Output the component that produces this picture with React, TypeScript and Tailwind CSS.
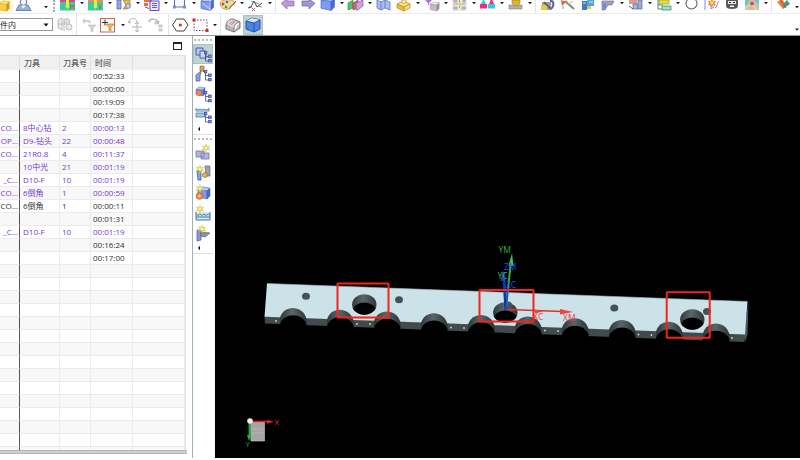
import type { ReactNode } from "react";
import clsx from "clsx";

const FONT = "font-['Open_Sans','Noto_Sans_CJK_SC',sans-serif]";

type Row = { op?: string; tool?: string; no?: string; time?: string; done?: boolean };

const ROWS: Row[] = [
  { time: "00:52:33" },
  { time: "00:00:00" },
  { time: "00:19:09" },
  { time: "00:17:38" },
  { op: "CO...", tool: "8中心钻", no: "2", time: "00:00:13", done: true },
  { op: "OP...", tool: "D9-钻头", no: "22", time: "00:00:48", done: true },
  { op: "CO...", tool: "21R0.8", no: "4", time: "00:11:37", done: true },
  { tool: "10中光", no: "21", time: "00:01:19", done: true },
  { op: "_C...", tool: "D10-F", no: "10", time: "00:01:19", done: true },
  { op: "CO...", tool: "6倒角", no: "1", time: "00:00:59", done: true },
  { op: "CO...", tool: "6倒角", no: "1", time: "00:00:11" },
  { time: "00:01:31" },
  { op: "_C...", tool: "D10-F", no: "10", time: "00:01:19", done: true },
  { time: "00:16:24" },
  { time: "00:17:00" },
  ...Array.from({ length: 14 }, () => ({})),
];

/* ---------- toolbar parts ---------- */

function Top({ label, menu, children }: { label: string; menu?: boolean; children: ReactNode }) {
  return (
    <>
      <button aria-label={label} className="h-3 w-5 shrink-0">
        <svg viewBox="0 0 20 12" className="h-3 w-5">{children}</svg>
      </button>
      {menu && <Caret label={label} high />}
    </>
  );
}

function Tool({ label, active, children }: { label: string; active?: boolean; children: ReactNode }) {
  return (
    <button
      aria-label={label}
      className={clsx("h-5 w-5 shrink-0", active && "bg-[#bfd3d2] outline-1 -outline-offset-1 outline-[#a9c4c3]")}
    >
      <svg viewBox="0 0 20 20" className="h-5 w-5">{children}</svg>
    </button>
  );
}

function Caret({ label, high }: { label: string; high?: boolean }) {
  return (
    <button aria-label={`${label} menu`} className={clsx("w-2 shrink-0", high ? "h-3" : "h-5")}>
      <svg viewBox={high ? "0 0 8 12" : "0 0 8 20"} className={clsx("w-2", high ? "h-3" : "h-5")}>
        <path d={high ? "M2 2h4L4 4.2z" : "M2 9h4L4 11.2z"} fill="#222" />
      </svg>
    </button>
  );
}

const Sep = () => <span className="mx-px h-full w-0.5 shrink-0 border-l border-[#e4e4e4]" />;

function Cube({ x = 0, y = 0, s = 1, c = ["#b9cdfb", "#7e9cf0", "#4b66cf"] }: { x?: number; y?: number; s?: number; c?: string[] }) {
  return (
    <g transform={`translate(${x} ${y}) scale(${s})`} stroke={c[2]} strokeWidth=".6" strokeLinejoin="round">
      <path d="M0 3 4 0l8 1-3 3z" fill={c[0]} />
      <path d="M0 3l9 1v8l-9-2z" fill={c[1]} />
      <path d="M9 4l3-3v8l-3 3z" fill={c[2]} />
    </g>
  );
}

const Star = ({ x, y }: { x: number; y: number }) => (
  <g transform={`translate(${x} ${y})`}>
    <path d="M0-4 1-1.3 3.8-2 2 0l2 2.2L1 1.4 0 4-1.1 1.4-4 2l2-2-1.8-2.2L-1-1.3z" fill="#efe24c" stroke="#b9b45a" strokeWidth=".4" />
    <circle r="1" fill="#fffbd0" />
  </g>
);

const Tree = ({ x, y }: { x: number; y: number }) => (
  <g transform={`translate(${x} ${y})`} fill="#8f9be0" stroke="#3c4aa6" strokeWidth=".8">
    <path d="M1.5 3v7H5M1.5 5.5H5" fill="none" />
    <rect x=".4" y=".4" width="2.4" height="2.4" />
    <rect x="4.6" y="4" width="2.6" height="2.4" />
    <rect x="4.6" y="8.4" width="2.6" height="2.4" />
  </g>
);

function MainToolbar() {
  return (
    <div className="flex h-3.5 w-full shrink-0 items-start overflow-hidden border-b border-[#ececec]">
      <button aria-label="New part" className="h-3 w-[13px] shrink-0 bg-[#fdf8d8]">
        <svg viewBox="0 0 13 12" className="h-3 w-[13px]">
          <Cube x={-1} y={1} s={0.85} c={["#ffe98a", "#f8cf45", "#d39c18"]} />
        </svg>
      </button>
      <Top label="Operator">
        <path d="M3 10.500 6 5h9l3 5.500z" fill="#8fb3e3" stroke="#4a6ea8" strokeWidth=".8" />
        <circle cx="10.500" cy="2" r="3.300" fill="#f3f6fb" stroke="#4d6f9f" />
        <path d="M8 5.500l2.500 3 2.500-3z" fill="#fff" />
      </Top>
      <span className="w-[9px] shrink-0" />
      <svg viewBox="0 0 8 12" className="h-3 w-2 shrink-0"><path d="M2 6h4L4 8.200z" fill="#222" /></svg>
      <span className="mx-[3px] h-3 w-px shrink-0 border-l-2 border-dotted border-[#aaa]" />
      <Top label="Mill setup" menu>
        <path d="M2 0h15v2H2z" fill="#e2408c" /><path d="M2 2h15v8.500H2z" fill="#3fc9a3" />
        <path d="M8 0h3v7H8z" fill="#dff03a" /><path d="M7 6h5l-2.500 3z" fill="#dff03a" />
        <path d="M12.500 9V5l1.800 2L16 5v4" fill="none" stroke="#d0452c" strokeWidth=".8" />
      </Top>
      <Top label="Turn setup" menu>
        <path d="M2 0h15v2H2z" fill="#f08a4a" /><path d="M2 2h15v8.500H2z" fill="#3fc9a3" />
        <path d="M8 0h3v7H8z" fill="#dff03a" /><path d="M7 6h5l-2.500 3z" fill="#dff03a" />
        <path d="M14 5v4" stroke="#d0452c" />
      </Top>
      <Top label="Create tool" menu>
        <path d="M3 0h4v9H3z" fill="#92a9de" stroke="#4c61a8" strokeWidth=".7" />
        <path d="M9 0h7v5l-3 4H9l3-4z" fill="#e6bf56" stroke="#9b7b35" strokeWidth=".7" />
        <circle cx="14" cy="6" r="2.500" fill="#c2cbe2" stroke="#6375a8" strokeWidth=".7" />
      </Top>
      <Top label="Create operation" menu>
        <path d="M2 0h8v2H2zM2 3h4v3H2z" fill="#ef6a42" /><path d="M3 7l4 1.500" stroke="#e24" />
        <path d="M8 1h9v9.500H8z" fill="#eceafe" stroke="#5847d6" />
        <path d="M10 3.500h5M10 5.500h5M10 7.500h5" stroke="#5847d6" strokeWidth=".9" />
      </Top>
      <Top label="Sketch" menu>
        <path d="M4.500 0v7h10V0" fill="#f7f8ff" stroke="#6270b5" />
        <path d="M3 5.500h3v3H3zM13 5.500h3v3h-3z" fill="#7f8bd1" />
      </Top>
      <Top label="Datum">
        <Cube x={3} y={-2} s={1.05} />
        <path d="M4 3l8 6M12 2v9" stroke="#e7eeff" strokeWidth=".8" />
      </Top>
      <Top label="Palette" menu>
        <path d="M2 3c0-4 14-5 15 0 0 3-5 1-5 4 0 4-10 3-10-4z" fill="#f0db9a" stroke="#a98a4a" strokeWidth=".7" />
        <circle cx="5" cy="4" r="1.500" fill="#e4473b" /><circle cx="8" cy="7" r="1.300" fill="#3b9e49" />
        <circle cx="9" cy="2" r="1.300" fill="#4c63d8" /><path d="M11 9l7-8" stroke="#a2452c" />
      </Top>
      <Top label="Spline" menu>
        <path d="M2 8l3-1 3-6 3 6 5-4" fill="none" stroke="#444" />
        <path d="M5 1l8 3M3 6l3 2M12 6l4 1" stroke="#777" strokeWidth=".8" />
        <path d="M6 8l3 3M9 8l-3 3" stroke="#dc2a2a" strokeWidth=".8" />
      </Top>
      <Sep />
      <Top label="Back">
        <path d="M3 3.500 9-1v2h7v5H9v3z" fill="#b8a0d6" stroke="#7f68a8" strokeWidth=".7" />
      </Top>
      <Top label="Forward">
        <path d="M17 3.500 11-1v2H4v5h7v3z" fill="#9d97d3" stroke="#6a6499" strokeWidth=".7" />
      </Top>
      <Top label="Shaded view" menu><Cube x={3} y={-3} s={1.12} /></Top>
      <Top label="Section" menu>
        <path d="M2 3l5-3v8l-5 2z" fill="#4fc274" stroke="#2a8748" strokeWidth=".6" />
        <path d="M7 3l5-3v8l-5 2z" fill="#e4605b" stroke="#8f3a44" strokeWidth=".6" />
        <path d="M10 3l7-3v6l-5 4h-2z" fill="#c2a1dc" stroke="#76559c" strokeWidth=".6" />
      </Top>
      <Top label="Map">
        <path d="M3 0l4 2 4-2 5 2v8l-5-2-4 2-4-2z" fill="#a9bef2" stroke="#5f75bb" strokeWidth=".8" />
        <path d="M7 1v9M11 0v8" stroke="#5f75bb" strokeWidth=".8" />
      </Top>
      <Top label="Assemblies" menu>
        <path d="M3 4l6-3 7 3-6 3z" fill="#fbe28b" stroke="#b98a1b" strokeWidth=".7" />
        <path d="M3 4l7 3v4L3 8z" fill="#f0bc3c" stroke="#b98a1b" strokeWidth=".7" />
        <path d="M10 7l6-3v4l-6 3z" fill="#fbd86a" stroke="#b98a1b" strokeWidth=".7" />
        <path d="M8 0h4v3H8z" fill="#fff1b9" stroke="#b98a1b" strokeWidth=".6" />
      </Top>
      <Top label="Filter objects" menu>
        <path d="M3 0h7L7 3v2H6V3z" fill="#b26be0" />
        <Cube x={8} y={2} s={0.76} c={["#eee", "#c9b8c4", "#9b8e9c"]} />
      </Top>
      <Top label="Pattern" menu>
        <path d="M3-1h13v11H3z" fill="#e9e9e6" stroke="#c4c4c4" strokeWidth=".6" />
        <path d="M4 0h3v2H4zM13 0h2v2h-2zM4 7h3v2H4zM12 7h3v2h-3z" fill="#ccc" stroke="#999" strokeWidth=".7" />
        <path d="M9.500 0v8M4 4h11" stroke="#a9a37c" /><circle cx="9.500" cy="4" r="1.700" fill="#f0dc4a" />
      </Top>
      <Top label="Compare" menu>
        <path d="M2 4h7v4.500H2z" fill="#ec3182" /><path d="M5.500-1 8 4H3z" fill="#34c6e4" />
        <path d="M10 4h7v4.500h-7z" fill="#34c6e4" /><path d="M13.500-2 16 4h-5z" fill="#ec3182" />
      </Top>
      <Top label="Inspect" menu>
        <path d="M3 5h13v4H3z" fill="#b7b3a6" stroke="#807c70" strokeWidth=".6" />
        <path d="M6 0h8v3l-2 3H8L6 3z" fill="#deb33a" stroke="#9e7f2a" strokeWidth=".6" />
      </Top>
      <Sep />
      <Top label="Feature edit">
        <path d="M4 2h9v8H4z" fill="#989ba4" /><path d="M3 5h6v5H3z" fill="#e4ce3b" />
        <path d="M12 1c5-1 4 7 0 8" fill="none" stroke="#5662a5" strokeWidth="2" /><path d="M6 2l6 6" stroke="#545968" strokeWidth="1.500" />
      </Top>
      <Top label="Wand">
        <path d="M7 1l9 8" stroke="#6f9477" strokeWidth="2" /><path d="M3 0l5 2-4 4z" fill="#ec5b47" />
        <path d="M10 4l5-3" stroke="#d8b750" /><path d="M5 6v3" stroke="#61b870" />
      </Top>
      <Top label="Blocks">
        <path d="M4 1h5v9H4z" fill="#3a7fb9" /><path d="M9 0h7v6H9z" fill="#57a4d7" />
        <path d="M9 6h4v3H9z" fill="#e3c144" /><path d="M5 3h3M11 2h4" stroke="#cbe6ff" />
      </Top>
      <Top label="Probe" menu>
        <path d="M4 1h12l-2 4h-4l-3 5H4z" fill="#9ea3bb" stroke="#666d8a" strokeWidth=".6" />
        <path d="M5 3h3v6H5z" fill="#7d86e0" />
      </Top>
      <Top label="Machine" menu>
        <path d="M3 0h8v4H3z" fill="#d79d8a" /><path d="M7 4h5v5H7z" fill="#a9b2e4" stroke="#5d679f" strokeWidth=".7" />
        <path d="M12 0h4v9h-4z" fill="#9daccf" stroke="#5d679f" strokeWidth=".7" /><path d="M3 6l4 3" stroke="#555" />
      </Top>
      <Top label="Program order" menu>
        <path d="M5 0h10v4H5z" fill="#e5dd45" stroke="#8a8b3b" strokeWidth=".6" />
        <path d="M4 0v9h5M4 5h5" fill="none" stroke="#4f8a6b" />
        <path d="M8 6h9v4H8z" fill="#a6dcc0" stroke="#3f8d67" strokeWidth=".8" />
      </Top>
      <Top label="Circle"><circle cx="9.500" cy="3.500" r="5.500" fill="none" stroke="#666" strokeWidth="1.100" /></Top>
      <Top label="Certificate">
        <path d="M3 0v10M9 5v4l3-2M13 8c3-1 1-4 4-7" fill="none" stroke="#7a86e6" />
        <path d="M10-1l1.300 2.600 3-.6-1.800 2.500 1.500 2.500-3-.7L10 7.500 8.500 5l-3 .5L7.300 3 6 .6l2.700.8z" fill="#f07a2c" />
        <circle cx="10" cy="3" r="1.800" fill="#ffe14d" />
      </Top>
      <Top label="Robot">
        <path d="M4 0h12v6c0 2-2 3-6 3S4 8 4 6z" fill="#5a5a5a" /><path d="M6 1h8v3H6z" fill="#e8e8e8" />
        <path d="M7 2h2v1H7zM11 2h2v1h-2z" fill="#222" /><path d="M8 5.500h4v1.500H8z" fill="#eee" />
      </Top>
      <Top label="Route" menu>
        <path d="M3 0h14v10H3z" fill="#c7c0b4" /><path d="M3 0h5l-3 5H3z" fill="#70c7b9" /><path d="M12 0h5v5z" fill="#7bbce0" />
        <path d="M3 9l6-6 6 7" fill="none" stroke="#ecd98d" strokeWidth="1.500" /><circle cx="10" cy="3.500" r="1.800" fill="#e23b3b" />
      </Top>
      <Sep />
      <Top label="Post process">
        <path d="M3 2l5-3 4 6-3 4z" fill="#ef7d43" /><path d="M9 9l7-5-3-4-3 3z" fill="#4e9a77" />
        <path d="M6 0l6 8" stroke="#874630" strokeWidth=".7" />
      </Top>
      <button aria-label="Toolbar options" className="ml-auto h-3 w-1.5 shrink-0">
        <svg viewBox="0 0 6 12" className="h-3 w-1.5"><path d="M1 6h4L3 8.200z" fill="#222" /></svg>
      </button>
    </div>
  );
}

function SelectionBar() {
  return (
    <div className="flex h-[22px] w-full shrink-0 items-center border-b border-[#8f9b9b]">
      <div className="relative h-[13px] w-[53px] shrink-0">
        <select
          aria-label="Selection scope"
          className="block h-[13px] w-full appearance-none border border-l-0 border-[#999] bg-white text-[8px] leading-[11px] text-[#222] outline-none"
        >
          <option>件内</option>
        </select>
        <svg viewBox="0 0 6 4" className="pointer-events-none absolute top-[5px] right-1 h-1 w-1.5">
          <path d="M.5.5h5L3 3.500z" fill="#111" />
        </svg>
      </div>
      <span className="w-0.5 shrink-0" />
      <Tool label="Interpart link">
        <g fill="#ececec" stroke="#bbb">
          <path d="M3 5l4-2v12l-4-2zM3 9h6M9 3v13" /><circle cx="12" cy="6.500" r="2.800" /><circle cx="14" cy="12" r="3" /><path d="M9 10l4-5" />
        </g>
      </Tool>
      <Sep />
      <Tool label="Reset filter">
        <path d="M3 6l3-3v2h3c3 0 3 3 2 4 0-1-1-2-3-2H6v2z" fill="#ccc" />
        <path d="M9 10h8l-3 3v4l-2-1v-3z" fill="#d2d2d2" stroke="#bbb" strokeWidth=".6" />
      </Tool>
      <Tool label="Selection filter">
        <rect x="1.500" y="3.500" width="14" height="13.500" fill="#fffafa" stroke="#dc5b5b" />
        <path d="M3 7.500h6M6 4.500v6" stroke="#333" />
        <path d="M7 9h8l-3 3.500V16l-2-1v-2.500z" fill="#f1b93f" stroke="#a9772a" strokeWidth=".6" />
      </Tool>
      <Caret label="Selection filter" />
      <Tool label="Rotate point">
        <path d="M2 8c0-6 7-6 8-1M2 8 1 6m1 2 2-1" fill="none" stroke="#b2b2b2" />
        <path d="M10 7v10M5 12h10M8 9l2-2 2 2M8 15l2 2 2-2" fill="none" stroke="#b2b2b2" />
      </Tool>
      <Tool label="Move to tree">
        <path d="M2 7c1-4 8-4 9 1l-2-1m2 1 1-2" fill="none" stroke="#b2b2b2" strokeWidth="1.500" />
        <path d="M12 10h3v2h-3zM12 14h3v2h-3zM8 7h3v2H8z" fill="#ddd" stroke="#b9b9b9" strokeWidth=".8" />
      </Tool>
      <Sep />
      <Tool label="Polygon select">
        <path d="M5.500 4h7.500l4 6-4 6H5.500l-4-6z" fill="none" stroke="#444" /><circle cx="9.300" cy="10" r="1.600" fill="#e1261f" />
      </Tool>
      <Tool label="Rectangle select">
        <rect x="3" y="5" width="13" height="10.500" fill="none" stroke="#555" strokeDasharray="1.500 1.500" />
        <path d="M1.500 3.500h3v3h-3zM14.500 14h3v3h-3z" fill="#de2d2a" />
      </Tool>
      <Caret label="Rectangle select" />
      <Sep />
      <Tool label="Face edges">
        <path d="M3 10c1-5 4-6 7-6l7 3c-4 1-6 3-6 7z" fill="#d9d9dd" stroke="#777" />
        <path d="M3 10v4l8 3v-4M11 17l6-4V7" fill="#b8b8c0" stroke="#777" /><path d="M6 9l5-3M8 10l5-4" stroke="#df6b6b" strokeWidth=".8" />
      </Tool>
      <Tool label="Wireframe cube" active>
        <path d="M3 6l6-3 8 2v9l-6 3-8-3z" fill="#3e8df0" stroke="#274aa8" /><path d="M3 6l8 2 6-3-8-2z" fill="#dce9fb" />
        <path d="M3 6l8 2v9M11 8l6-3" fill="none" stroke="#244cae" /><path d="M3 14l8-6 6 6" fill="none" stroke="#c33c72" strokeWidth=".7" />
      </Tool>
      <button aria-label="Selection bar options" className="ml-auto h-5 w-1.5 shrink-0">
        <svg viewBox="0 0 6 20" className="h-5 w-1.5"><path d="M1 13.500h4l-2 2.200z" fill="#222" /></svg>
      </button>
    </div>
  );
}

/* ---------- operation list ---------- */

function OperationList() {
  return (
    <section className={clsx("flex w-[187px] shrink-0 flex-col text-[8px] text-[#303030]", FONT)}>
      <div className="flex h-[19px] items-center justify-end pr-[5px]">
        <button aria-label="Maximize panel" className="h-2 w-[9px] border border-t-2 border-[#222]" />
      </div>
      <table className="w-[186px] table-fixed border-separate border-spacing-0 border-r border-[#e2e2e2]">
        <colgroup>
          <col className="w-5" />
          <col className="w-10" />
          <col className="w-[31px]" />
          <col className="w-[42px]" />
          <col />
        </colgroup>
        <thead>
          <tr className="bg-[#f0f0f0] text-left leading-[14px] *:border-t *:border-r *:border-[#e0e0e0] *:p-0 *:font-normal">
            <th className="h-[15px]" />
            <th><span className="pl-1">刀具</span></th>
            <th><span className="pl-[3px]">刀具号</span></th>
            <th><span className="pl-1">时间</span></th>
            <th />
          </tr>
        </thead>
        <tbody>
          {ROWS.map((r, i) => (
            <tr
              key={i}
              className={clsx(
                "h-[13px] leading-[12px] whitespace-nowrap *:border-r *:border-b *:border-[#ebebeb] *:p-0",
                i % 2 === 1 && "bg-[#f8f8f8]",
                r.done && "text-[#7536d6]",
              )}
            >
              <td className="border-r-[#555]!">
                <div className="flex h-3 justify-end pr-px">{r.op}</div>
              </td>
              <td><span className="pl-[3px]">{r.tool}</span></td>
              <td><span className="pl-0.5">{r.no}</span></td>
              <td><span className="pl-0.5">{r.time}</span></td>
              <td />
            </tr>
          ))}
          <tr className="h-[3px] bg-[#f8f8f8] *:border-r *:border-[#ebebeb] *:p-0">
            <td className="border-r-[#555]!" />
            <td /><td /><td /><td />
          </tr>
        </tbody>
      </table>
      <div className="h-1 border-y border-[#b5b5b5] bg-[#cfcfcf]" />
    </section>
  );
}

/* ---------- side dock ---------- */

const Grip = () => <span className="my-[3px] w-[18px] border-t-2 border-dotted border-[#bbb]" />;
const DockEnd = ({ label }: { label: string }) => (
  <button aria-label={label} className="flex h-[11px] w-full items-center border-b border-[#ddd] pb-px pl-1">
    <svg viewBox="0 0 4 6" className="h-1.5 w-1"><path d="M3 .8v4.400L1 3z" fill="#111" /></svg>
  </button>
);

function SideDock() {
  return (
    <nav className="ml-[5px] flex w-[23px] shrink-0 flex-col items-center border-l border-[#9fb0b8] pr-0.5">
      <Grip />
      <Tool label="Program view" active>
        <path d="M3 4h7v7H3z" fill="#b5c3ed" stroke="#4a5fae" />
        <path d="M7 7h6v7H7z" fill="#cbd6f5" stroke="#4a5fae" />
        <Tree x={11} y={7} />
      </Tool>
      <Tool label="Tool view">
        <path d="M7 2h4v5H7z" fill="#e0a142" stroke="#8a652c" strokeWidth=".6" />
        <path d="M8 7l-5 4v6h4v-5z" fill="#90a2d6" stroke="#5365a0" strokeWidth=".8" /><path d="M10 7l3 3" stroke="#555" />
        <Tree x={11} y={6} />
      </Tool>
      <Tool label="Geometry view">
        <Cube x={3} y={3} s={0.75} /><circle cx="6" cy="9" r="2.800" fill="#ee8a4c" stroke="#bb5630" strokeWidth=".6" />
        <Tree x={11} y={7} />
      </Tool>
      <Tool label="Method view">
        <path d="M3 4v3h13V4M3 5l2 1 2-1 2 1 2-1 2 1 3-1" fill="none" stroke="#548aa8" />
        <path d="M3 9h9v4H3z" fill="#a7cadd" stroke="#4a7ca0" strokeWidth=".8" />
        <Tree x={11} y={8} />
      </Tool>
      <DockEnd label="More views" />
      <Grip />
      <Tool label="Create program">
        <path d="M3 8h8v6H3zM8 10h8v6H8z" fill="#b0b9df" stroke="#6c76ab" strokeWidth=".8" /><Star x={13} y={5} />
      </Tool>
      <Tool label="Create tool">
        <path d="M4 8h4v9H5z" fill="#8fa5df" stroke="#41589f" strokeWidth=".8" />
        <path d="M12 3h5v10h-4z" fill="#a0a2af" stroke="#646675" strokeWidth=".7" />
        <circle cx="12" cy="12" r="2.500" fill="#e9b057" stroke="#99682a" strokeWidth=".7" /><Star x={7} y={6} />
      </Tool>
      <Tool label="Create geometry">
        <Cube x={5} y={4} s={1} /><circle cx="6.500" cy="13" r="3.300" fill="#f18a4a" stroke="#c95730" strokeWidth=".8" />
        <circle cx="6.500" cy="13" r="1.200" fill="#ffd9a8" /><Star x={7} y={5.5} />
      </Tool>
      <Tool label="Create method">
        <path d="M3 9v8h14V9" fill="#d4e8f2" stroke="#41799a" />
        <path d="M3 11l2 1.500L7 11l2 1.500 2-1.500 2 1.500 2-1.500 2 1M3 14h14" fill="none" stroke="#41799a" /><Star x={7} y={6} />
      </Tool>
      <Tool label="Create operation">
        <path d="M4 7h4v10l-4 1z" fill="#8c98de" stroke="#4f599e" strokeWidth=".7" />
        <path d="M8 9l9 1-5 4-4-1z" fill="#8f93a0" stroke="#5c6070" strokeWidth=".7" /><Star x={9} y={6} />
      </Tool>
      <DockEnd label="More create commands" />
    </nav>
  );
}

/* ---------- graphics window ---------- */

const PITCH = 47;
const ARCHES = Array.from({ length: 10 }, (_, k) => ({ x: 280 + PITCH * k, y: 318 + 1.72 * k }));
const BORES = [{ x: 364.3, y: 304.5 }, { x: 505.3, y: 312.5 }, { x: 692.3, y: 319.5 }];
const PINS = [[306, 296.2], [399, 299.7], [508, 305], [614.3, 308], [707, 311.5]];
const MARKS = [[337.5, 283.5, 51, 34], [479.5, 290, 54, 31.5], [666.7, 292.2, 43, 45.5]];
const SCREWS = [[276, 321], [357, 324], [370, 324], [451, 327.5], [464, 328], [545, 330.5], [558, 331], [638.5, 334.5], [651.5, 335], [732, 338]];

function Viewport() {
  return (
    <main className="flex min-w-0 flex-1 bg-black">
      <svg viewBox="215 36 585 422" preserveAspectRatio="xMinYMin slice" className="h-[422px] w-full" fontFamily="'Open Sans', sans-serif">
        <defs>
          <linearGradient id="wall">
            <stop offset="0" stopColor="#2e3638" />
            <stop offset=".45" stopColor="#59666a" />
            <stop offset="1" stopColor="#2c3436" />
          </linearGradient>
          {BORES.map((b, i) => (
            <clipPath id={`bore${i}`} key={i}><ellipse cx={b.x} cy={b.y} rx="12.200" ry="10.300" /></clipPath>
          ))}
        </defs>

        <path d="M264.500 316.500 745 334l-.7 8L265 323.500z" fill="#414b4e" />
        <path d="M748.500 301.500l-1 33-2.500 7.500-1-8z" fill="#4a5659" />
        <path d="M267 283.500 747.500 301.500 745 334.500 264.500 316.800z" fill="#cce2e9" />
        <path d="M267 283.500 747.500 301.500" stroke="#9fb0b5" strokeWidth=".6" />

        {ARCHES.map(({ x, y }) => (
          <g key={x}>
            <path d={`M${x} ${y + 8}V${y}C${x + 3} ${y - 13.5} ${x + 23} ${y - 13.5} ${x + 26.5} ${y + 1}V${y + 9}z`} fill="url(#wall)" />
            <path d={`M${x} ${y + 12}V${y + 6}C${x + 4} ${y - 5} ${x + 21} ${y - 6} ${x + 26.5} ${y + 6}V${y + 12}z`} fill="#000" />
          </g>
        ))}
        {BORES.map((b, i) => (
          <g key={b.x} clipPath={`url(#bore${i})`}>
            <rect x={b.x - 13} y={b.y - 11} width="26" height="22" fill="url(#wall)" />
            <ellipse cx={b.x} cy={b.y + 7.5} rx="12" ry="9.500" fill="#000" />
          </g>
        ))}
        {PINS.map(([x, y]) => <ellipse key={x} cx={x} cy={y} rx="4" ry="3.500" fill="#465154" />)}
        {SCREWS.map(([x, y]) => <circle key={x} cx={x} cy={y} r=".9" fill="#cfd8da" />)}

        {/* machine and work coordinate systems */}
        <path d="M506 310l4.500-45" stroke="#3fae3f" strokeWidth="2" />
        <path d="M512 253l-3.500 12.500 5 .5z" fill="#48bf48" />
        <path d="M506 310l-2.500-38" stroke="#1236a8" strokeWidth="3" />
        <path d="M506 310l2-22" stroke="#1d4fd8" strokeWidth="1.500" />
        <path d="M502.500 270l-2 11 5-.5z" fill="#1a3fc0" />
        <path d="M507 309.500l55 2" stroke="#e0302a" strokeWidth="1.500" />
        <path d="M573 312l-13-3v5.500z" fill="#f04444" />
        <path d="M543 311.500l-8-2v4z" fill="#f04444" />
        <g fontSize="8.500">
          <text x="498.500" y="252.500" fill="#3fae3f">YM</text>
          <text x="497.500" y="278.500" fill="#3fae3f">YC</text>
          <text x="504" y="269.500" fill="#1f53f0">ZM</text>
          <text x="506" y="287.500" fill="#1f53f0">ZC</text>
          <text x="533" y="319.500" fill="#e8413b">XC</text>
          <text x="563" y="320.500" fill="#e8413b">XM</text>
        </g>

        {MARKS.map(([x, y, w, h]) => (
          <rect key={x} x={x} y={y} width={w} height={h} rx=".5" fill="none" stroke="#f5231b" strokeWidth="2" />
        ))}

        {/* view triad */}
        <path d="M250 422h14.500v19H251z" fill="#a5a5a5" stroke="#c6c6c6" strokeWidth=".6" />
        <path d="M252 429h11M252 433h11" stroke="#bcbcbc" strokeWidth=".6" />
        <path d="M249.500 422v14" stroke="#20a52c" strokeWidth="2" />
        <path d="M249 441l-2-6h4z" fill="#22b52e" />
        <path d="M251 421.500h17" stroke="#e0241f" strokeWidth="1.500" />
        <path d="M274 421.700l-7-2v4z" fill="#e0241f" />
        <circle cx="250" cy="421" r="2.800" fill="#eee" />
        <g fontSize="8">
          <text x="274.500" y="425" fill="#e0342f">X</text>
          <text x="245.500" y="446.500" fill="#22b52e">Y</text>
        </g>
      </svg>
    </main>
  );
}

export default function App() {
  return (
    <div className={clsx("flex min-h-screen flex-col overflow-hidden bg-white pb-0.5", FONT)}>
      <MainToolbar />
      <SelectionBar />
      <div className="flex flex-1">
        <OperationList />
        <SideDock />
        <Viewport />
      </div>
    </div>
  );
}
